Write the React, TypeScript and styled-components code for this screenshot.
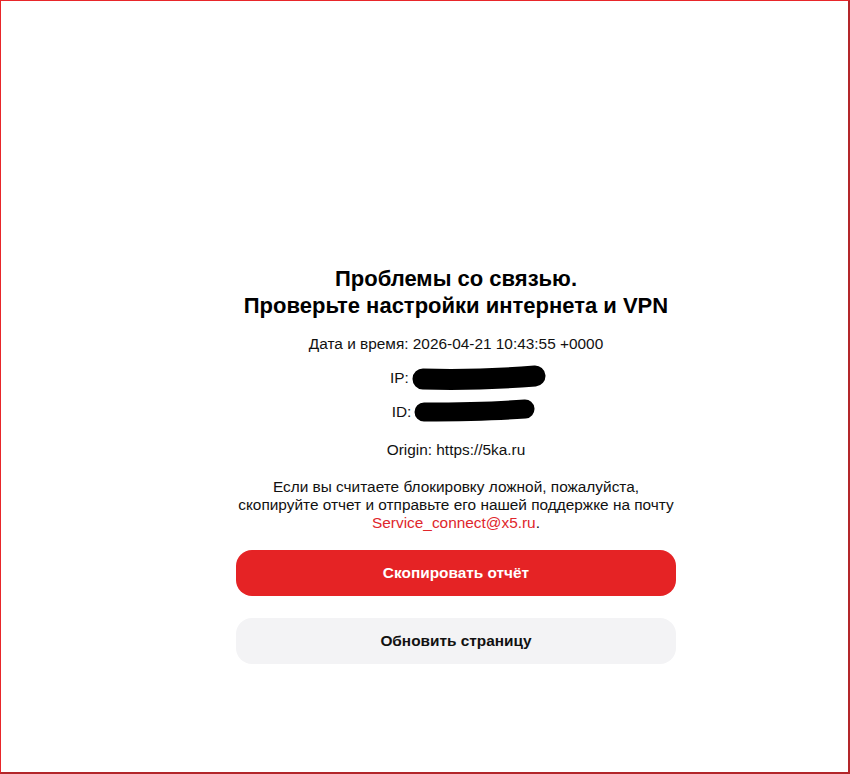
import React from "react";
import styled, { createGlobalStyle } from "styled-components";

const GlobalStyle = createGlobalStyle`
  html, body { margin: 0; padding: 0; background: #ffffff; }
  body { font-family: Arial, "Liberation Sans", Helvetica, sans-serif; color: #000; }
  * { box-sizing: border-box; }
`;

const Frame = styled.div`
  width: 850px;
  height: 774px;
  border-top: 1px solid #e8262a;
  border-left: 1px solid #e8262a;
  border-right: 2px solid #b3262a;
  border-bottom: 2px solid #b3262a;
  display: flex;
  justify-content: flex-start;
  padding-top: 264px;
  padding-left: 235px;
`;

const Card = styled.div`
  width: 440px;
  display: flex;
  flex-direction: column;
  align-items: stretch;
  text-align: center;
`;

const Title = styled.h1`
  margin: 0;
  font-size: 22px;
  line-height: 27px;
  font-weight: 700;
  color: #000;
`;

const Line = styled.div<{ $mt: number }>`
  margin-top: ${(p) => p.$mt}px;
  font-size: 15.4px;
  line-height: 18px;
  color: #111;
  display: flex;
  justify-content: center;
  align-items: center;
`;

const Hidden = styled.span<{ $w: number }>`
  position: relative;
  display: inline-block;
  width: ${(p) => p.$w}px;
  height: 18px;
  margin-left: 3px;
`;

const Blob = styled.svg`
  position: absolute;
  left: 0;
  top: -4px;
`;

const Paragraph = styled.p`
  margin: 19px 0 0;
  font-size: 15.4px;
  line-height: 18px;
  color: #111;
`;

const Mail = styled.a`
  color: #e0262b;
  text-decoration: none;
`;

const Button = styled.button<{ $primary?: boolean; $mt: number }>`
  margin-top: ${(p) => p.$mt}px;
  height: 46px;
  width: 100%;
  border: none;
  border-radius: 16px;
  font-family: Arial, "Liberation Sans", Helvetica, sans-serif;
  font-size: 15.4px;
  font-weight: 700;
  background: ${(p) => (p.$primary ? "#e52325" : "#f3f3f5")};
  color: ${(p) => (p.$primary ? "#ffffff" : "#111111")};
  cursor: pointer;
`;

export default function App() {
  return (
    <>
      <GlobalStyle />
      <Frame>
        <Card>
          <Title>
            Проблемы со связью.
            <br />
            Проверьте настройки интернета и VPN
          </Title>
          <Line $mt={16}>Дата и время: 2026-04-21 10:43:55 +0000</Line>
          <Line $mt={16}>
            IP:
            <Hidden $w={110}>
              <Blob width="134" height="26" viewBox="0 0 134 26">
                <path
                  d="M11 14 C 45 15, 85 14, 123 11"
                  stroke="#000"
                  strokeWidth="21"
                  strokeLinecap="round"
                  fill="none"
                />
              </Blob>
            </Hidden>
          </Line>
          <Line $mt={16}>
            ID:
            <Hidden $w={106}>
              <Blob width="122" height="24" viewBox="0 0 122 24">
                <path
                  d="M10 13 C 45 13, 85 12, 111 10"
                  stroke="#000"
                  strokeWidth="19"
                  strokeLinecap="round"
                  fill="none"
                />
              </Blob>
            </Hidden>
          </Line>
          <Line $mt={20}>Origin: https://5ka.ru</Line>
          <Paragraph>
            Если вы считаете блокировку ложной, пожалуйста,
            <br />
            скопируйте отчет и отправьте его нашей поддержке на почту
            <br />
            <Mail href="mailto:Service_connect@x5.ru">Service_connect@x5.ru</Mail>.
          </Paragraph>
          <Button $primary $mt={18}>Скопировать отчёт</Button>
          <Button $mt={22}>Обновить страницу</Button>
        </Card>
      </Frame>
    </>
  );
}
